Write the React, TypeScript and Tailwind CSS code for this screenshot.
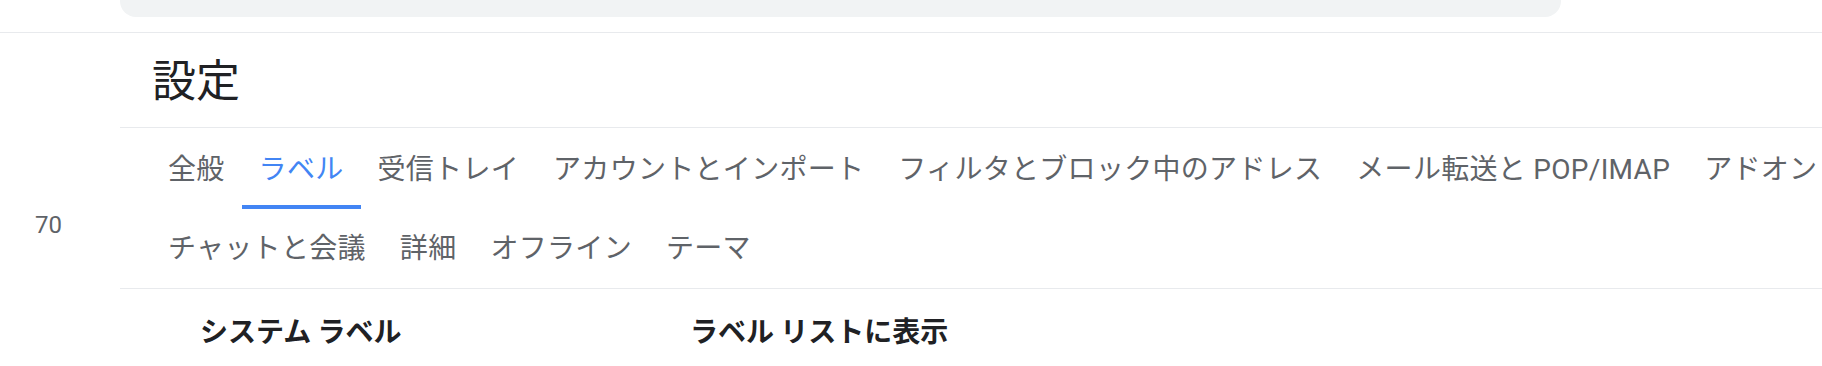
import React from "react";

type Tab = { label: string; active?: boolean };

const firstRow: Tab[] = [
  { label: "全般" },
  { label: "ラベル", active: true },
  { label: "受信トレイ" },
  { label: "アカウントとインポート" },
  { label: "フィルタとブロック中のアドレス" },
  { label: "メール転送と POP/IMAP" },
  { label: "アドオン" },
];

const secondRow: Tab[] = [
  { label: "チャットと会議" },
  { label: "詳細" },
  { label: "オフライン" },
  { label: "テーマ" },
];

function TabItem({ tab }: { tab: Tab }) {
  return (
    <div className="relative flex h-[79px] shrink-0 items-center px-[17px] whitespace-nowrap">
      <span
        className={
          tab.active
            ? "font-['Roboto','Noto_Sans_CJK_JP',sans-serif] text-[28px] leading-[40px] tracking-[0.3px] text-[#4285f4]"
            : "font-['Roboto','Noto_Sans_CJK_JP',sans-serif] text-[28px] leading-[40px] tracking-[0.3px] text-[#5f6368]"
        }
      >
        {tab.label}
      </span>
      {tab.active && <div className="absolute bottom-0 left-0 right-0 h-[4px] bg-[#4285f4]" />}
    </div>
  );
}

export default function App() {
  return (
    <div className="h-[366px] w-[1822px] overflow-hidden bg-white font-['Noto_Sans_CJK_JP',sans-serif]">
      {/* top bar with the bottom of the search box */}
      <div className="h-[33px] border-b border-[#e8eaed]">
        <div className="ml-[120px] h-[17px] w-[1441px] rounded-b-[16px] bg-[#f1f3f4]" />
      </div>

      <div className="flex">
        {/* sidebar */}
        <div className="w-[120px] shrink-0 pt-[176px] pl-[35px]">
          <span className="font-['Roboto',sans-serif] text-[24px] leading-[32px] text-[#5f6368]">70</span>
        </div>

        {/* main */}
        <div className="flex-1">
          <div className="flex h-[95px] items-center border-b border-[#e8eaed] pb-[4px] pl-[32px]">
            <h1 className="text-[44px] leading-[56px] font-normal text-[#202124]">設定</h1>
          </div>

          <div className="border-b border-[#e8eaed] pt-[2px] pl-[31px]">
            <div className="flex">
              {firstRow.map((t) => (
                <TabItem key={t.label} tab={t} />
              ))}
            </div>
            <div className="flex">
              {secondRow.map((t) => (
                <TabItem key={t.label} tab={t} />
              ))}
            </div>
          </div>

          <div className="flex pt-[21px] pl-[80px]">
            <div className="w-[490px] text-[28px] leading-[40px] font-bold text-[#202124]">システム ラベル</div>
            <div className="text-[28px] leading-[40px] font-bold text-[#202124]">ラベル リストに表示</div>
          </div>
        </div>
      </div>
    </div>
  );
}
